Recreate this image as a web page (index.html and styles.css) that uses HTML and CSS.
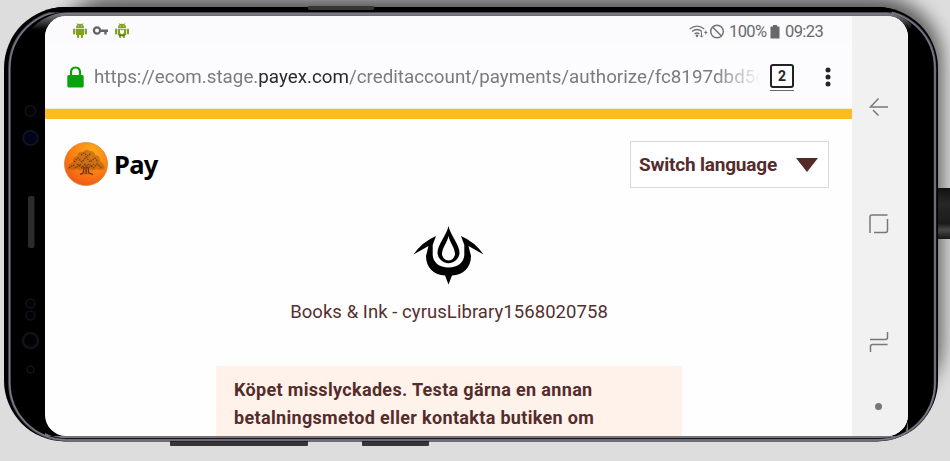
FILE: index.html
```
<!DOCTYPE html>
<html lang="sv">
<head>
<meta charset="utf-8">
<title>Pay</title>
<link rel="stylesheet" href="styles.css">
</head>
<body>
<svg class="device" viewBox="0 0 950 461" aria-hidden="true">
  <defs>
    <filter id="soft" x="-10%" y="-20%" width="120%" height="140%"><feGaussianBlur stdDeviation="9"/></filter>
    <filter id="blur1"><feGaussianBlur stdDeviation="0.7"/></filter>
    <clipPath id="body"><rect x="4" y="7" width="934" height="434.500" rx="61"/></clipPath>
    <linearGradient id="sheen" x1="0" y1="0" x2="0" y2="1">
      <stop offset="0" stop-color="#86848b"/><stop offset="1" stop-color="#000"/>
    </linearGradient>
    <linearGradient id="cable" x1="0" y1="0" x2="0" y2="1">
      <stop offset="0" stop-color="#111"/><stop offset=".3" stop-color="#272727"/><stop offset=".7" stop-color="#1b1b1b"/><stop offset=".82" stop-color="#484848"/><stop offset="1" stop-color="#151515"/>
    </linearGradient>
  </defs>
  <rect x="48" y="-4" width="894" height="412" rx="66" fill="#000" opacity=".58" filter="url(#soft)"/>
  <rect x="930" y="188" width="20" height="51" fill="url(#cable)"/>
  <rect x="170" y="437" width="138" height="9" rx="1" fill="#373536"/>
  <rect x="362" y="437" width="67" height="9" rx="1" fill="#373536"/>
  <rect x="4" y="7" width="934" height="434.500" rx="61" fill="#000"/>
  <g clip-path="url(#body)">
    <rect x="9.500" y="11" width="925.500" height="429" rx="57" fill="none" stroke="#5b5765" stroke-width="2.500" filter="url(#blur1)"/>
    <rect x="9.500" y="11" width="925.500" height="429" rx="57" fill="none" stroke="#858091" stroke-width="1"/>
    <path d="M50 7H892V12.500H50Z" fill="#000"/>
    <path d="M30 30Q46 13 66 12.500H885Q901 14 911 24V30H30Z" fill="url(#sheen)"/>
    <path d="M45 421V436H905L908 421V432Q898 438 878 438H62Q52 437 45 433Z" fill="#77757b"/>
  </g>
  <rect x="308" y="6" width="66" height="4" rx="1" fill="#343735"/>
  <g fill="#020205" stroke="#11131b" stroke-width="1.500">
    <circle cx="30.500" cy="111" r="5.200"/>
    <circle cx="30.500" cy="138" r="7.200" fill="#020218" stroke="#101322" stroke-width="2"/>
    <circle cx="30.500" cy="303.500" r="4.500"/>
    <circle cx="30.500" cy="315.500" r="4.500"/>
    <circle cx="30.500" cy="340.500" r="7.500" stroke-width="2.500"/>
    <circle cx="30.500" cy="369.500" r="3.500"/>
  </g>
  <rect x="28" y="196" width="6.500" height="52" rx="2" fill="#2b2b2b"/>
</svg>
<main class="screen">
  <div class="view">
    <div class="status">
      <svg class="notes" viewBox="0 0 60 18" aria-hidden="true">
        <g id="bot" fill="#83a31b">
          <path d="M4 6Q4 1.800 8 1.800T12 6ZM3.700 6.700H12.300V12Q12.300 13 11.300 13H4.700Q3.700 13 3.700 12Z"/>
          <rect x="1" y="6.500" width="2" height="6" rx="1"/><rect x="13" y="6.500" width="2" height="6" rx="1"/>
          <rect x="5" y="12" width="2.200" height="4" rx="1"/><rect x="8.800" y="12" width="2.200" height="4" rx="1"/>
          <path d="M5 1L6 3M11 1L10 3" stroke="#83a31b" stroke-width=".6"/>
          <circle cx="6.300" cy="4" r=".5" fill="#fff"/><circle cx="9.700" cy="4" r=".5" fill="#fff"/>
        </g>
        <circle cx="25" cy="8.500" r="3.100" fill="none" stroke="#626266" stroke-width="2.200"/>
        <path d="M28 7.500H36V10H34.700V12.500H32.300V10H28Z" fill="#626266"/>
        <use href="#bot" x="42"/>
        <path d="M48 7L49 8.200H51L52 7V10Q52 12 50 12T48 10Z" fill="#fff"/>
        <path d="M46.500 12.500Q50 15 53.500 12.500" stroke="#587513" stroke-width="1.200" fill="none"/>
      </svg>
      <div class="state">
        <svg class="signal" viewBox="0 0 36 18" aria-hidden="true" fill="none" stroke="#737377" stroke-width="1.300">
          <path d="M.7 6Q8 .2 15.300 6M3 8.500Q8 4.500 13 8.500M5.500 11Q8 9 10.500 11"/>
          <circle cx="8" cy="12.800" r=".7" fill="#737377"/>
          <path d="M12.500 9V14M11 12.500L12.500 14.200L14 12.500M16.800 11.500V7.500M15.300 9.500H18.300" stroke-width="1"/>
          <circle cx="28" cy="8.500" r="6.300" stroke-width="1.500"/><path d="M23.500 4L32.500 13" stroke-width="1.500"/>
        </svg>
        <span class="percent">100%</span>
        <svg class="battery" viewBox="0 0 10 14" aria-hidden="true"><path d="M3 0H7V1.500H9Q9.500 1.500 9.500 2V13.500H.5V2Q.5 1.500 1 1.500H3Z" fill="#68686b"/></svg>
        <span class="clock">09:23</span>
      </div>
    </div>
    <div class="address">
      <svg class="lock" viewBox="0 0 17 22" aria-hidden="true"><path d="M4 11V6.500Q4 1.500 8.500 1.500T13 6.500V11" fill="none" stroke="#08a20c" stroke-width="2.200"/><rect x=".3" y="9" width="16.400" height="12.500" rx="1.500" fill="#08a20c"/></svg>
      <div class="url">https://ecom.stage.<b>payex.com</b>/creditaccount/payments/authorize/fc8197dbd5c</div>
      <div class="tabs"><span>2</span></div>
      <svg class="more" viewBox="0 0 6 20" aria-hidden="true" fill="#252527"><circle cx="3" cy="3" r="2.500"/><circle cx="3" cy="10" r="2.500"/><circle cx="3" cy="17" r="2.500"/></svg>
    </div>
    <div class="stripe"></div>
    <header class="top">
      <div class="brand">
        <svg class="coin" viewBox="0 0 44 44" aria-hidden="true">
          <defs><radialGradient id="gold" cx=".65" cy=".2" r=".85"><stop offset="0" stop-color="#ffa818"/><stop offset=".6" stop-color="#fb7d12"/><stop offset="1" stop-color="#ef5716"/></radialGradient></defs>
          <circle cx="22" cy="22" r="21.500" fill="url(#gold)" stroke="#d78137" stroke-width=".8"/>
          <path d="M3.500 27Q4 22 9 20Q8 15 13 14Q14 9 19 10Q22 6 26 9Q31 9 31 13Q36 13 36 19Q41 22 40.500 27Q36 29 32 27Q28 30 24.500 26.500L25 31Q26 32 29 32.500H16L19 31L20 26.500Q16 30 13 27Q8 29 3.500 27Z" fill="#b35a13" fill-opacity=".6"/>
          <path d="M5 26l4-3 3 3 4-4 4 4 5-4 4 4 4-4 5 4M10 20l4-4 4 4 4-5 4 5 5-4 3 4M17 13l3-2 4 3 3-3M13 22l5 4 3-4 3 4 6-4" fill="none" stroke="#6b3c0a" stroke-width="1.100" stroke-dasharray="1.500 1"/>
          <path d="M20 25l-1 6-3 1.500M24 25l1 6 4 1.500M22 25v7" fill="none" stroke="#6d2f0a" stroke-width="1.200"/>
        </svg>
        <span class="pay">Pay</span>
      </div>
      <button class="language"><span>Switch language</span><svg viewBox="0 0 22 14" aria-hidden="true"><path d="M0 0H22L11 14Z" fill="#522a28"/></svg></button>
    </header>
    <section class="payment">
      <svg class="emblem" viewBox="0 0 72 60" aria-hidden="true">
        <path d="M35.500 0C37 8 46.500 19 46.500 26.500A11 10.700 0 0 1 24.500 26.500C24.500 19 34 8 35.500 0ZM35.500 10C34.500 16 29 22 29 28A6.500 6.500 0 0 0 42 28C42 22 36.500 16 35.500 10Z" fill-rule="evenodd"/>
        <path d="M.5 28.500Q9 16 23 10L19.700 19V29C20 36 26 41.500 35.500 41.500S51 36 51.300 29V19L48 10Q62 16 70.500 28.500L55.500 20L58 30C58 42 50 49 39 49.500L35.500 58.500L32 49.500C21 49 13 42 13 30L15.500 20Z"/>
      </svg>
      <p class="merchant">Books &amp; Ink - cyrusLibrary1568020758</p>
      <div class="notice"><p>Köpet misslyckades. Testa gärna en annan</p><p>betalningsmetod eller kontakta butiken om</p></div>
    </section>
  </div>
  <nav class="keys">
    <svg viewBox="0 0 20 20" class="back" aria-hidden="true"><path d="M19 10H1.500L9.500 1.500M4 13L9.500 18.500"/></svg>
    <svg viewBox="0 0 20 20" class="home" aria-hidden="true"><path d="M1 19V3Q1 1 3 1H18.500M18.500 5V16.500Q18.500 18.500 16.500 18.500H5"/></svg>
    <svg viewBox="0 0 20 20" class="recent" aria-hidden="true"><path d="M1 7.500H16.500Q18.500 7.500 18.500 5.500V0M18.500 12.500H3.500Q1.500 12.500 1.500 14.500V20"/></svg>
    <span class="dot"></span>
  </nav>
</main>
</body>
</html>
```
FILE: styles.css
```
* { box-sizing: border-box; }
body { margin: 0; width: 950px; height: 461px; overflow: hidden; background: #ddd; font-family: Roboto, "Liberation Sans", sans-serif; padding: 16px 42px 25px 45px; }
svg { display: block; flex: none; }
p { margin: 0; }
.device { position: absolute; left: 0; top: 0; width: 950px; height: 461px; }
.screen { position: relative; width: 863px; height: 420px; display: flex; border-radius: 21px; overflow: hidden; background: #fefefe; }
.view { width: 807px; display: flex; flex-direction: column; }
.status { height: 29px; background: #fbfafd; display: flex; justify-content: space-between; padding: 2px 29px 0 27px; align-items: center; }
.notes { width: 60px; height: 18px; margin-top: -1px; }
.state { display: flex; align-items: center; color: #69696c; font-size: 16.5px; line-height: 20px; white-space: nowrap; }
.signal { width: 36px; height: 18px; margin-right: 4px; }
.percent { width: 37px; letter-spacing: -.6px; margin-right: 4px; }
.battery { width: 10px; height: 14px; margin-right: 5px; }
.clock { width: 38px; letter-spacing: -.6px; }
.address { height: 64px; background: #fcfbfe; display: flex; align-items: center; padding: 1px 0 0 22px; border-bottom: 1px solid #f0e8e7; }
.lock { width: 17px; height: 22px; margin-right: 10px; }
.url { width: 666px; flex: none; overflow: hidden; white-space: nowrap; color: #7b7b7e; font-size: 18.8px; line-height: 28px; letter-spacing: 0; -webkit-mask-image: linear-gradient(90deg, #000 620px, transparent 667px); mask-image: linear-gradient(90deg, #000 620px, transparent 667px); }
.url b { font-weight: 400; color: #29292b; }
.tabs { width: 24px; height: 27px; margin-left: 10px; border-bottom: 1px solid #68686a; flex: none; }
.tabs span { display: block; width: 24px; height: 24px; border: 2.5px solid #222224; border-radius: 3px; text-align: center; font: 700 14px/20px Roboto, sans-serif; color: #222224; }
.more { width: 6px; height: 20px; margin-left: 31px; }
.stripe { height: 10px; background: #ffbb22; flex: none; }
.top { display: flex; justify-content: space-between; align-items: flex-start; padding: 22px 23px 0 19px; height: 69px; }
.brand { display: flex; align-items: center; gap: 6px; padding-top: 1px; }
.coin { width: 44px; height: 44px; }
.pay { font: 700 25.5px/34px "Noto Sans", sans-serif; color: #000; letter-spacing: -.7px; }
.language { width: 199px; height: 47px; border: 1px solid #d9d9dc; background: #fff; display: flex; align-items: center; justify-content: space-between; padding: 0 10px 0 8px; font: 700 19px/24px Roboto, sans-serif; letter-spacing: -.2px; color: #542c2b; }
.language span { white-space: nowrap; }
.language svg { width: 22px; height: 14px; }
.payment { width: 466px; margin-left: 171px; padding-top: 38px; }
.emblem { width: 72px; height: 60px; margin-left: 197px; }
.merchant { font-size: 18.5px; line-height: 24px; letter-spacing: .06px; color: #55302f; text-align: center; margin-top: 14px; white-space: nowrap; }
.notice { margin-top: 42px; height: 70px; padding: 10px 18px; background: #fff2ea; color: #542c2b; font-size: 18px; letter-spacing: .33px; line-height: 28px; font-weight: 700; white-space: nowrap; }
.keys { width: 56px; background: #f1f1f1; display: flex; flex-direction: column; align-items: center; padding-top: 81px; padding-right: 3px; }
.keys svg { width: 20px; height: 20px; fill: none; stroke: #78787a; stroke-width: 1.5; }
.home { margin-top: 97px; }
.recent { margin-top: 98px; }
.dot { width: 7px; height: 7px; border-radius: 50%; background: #77777a; margin-top: 51px; }
```
